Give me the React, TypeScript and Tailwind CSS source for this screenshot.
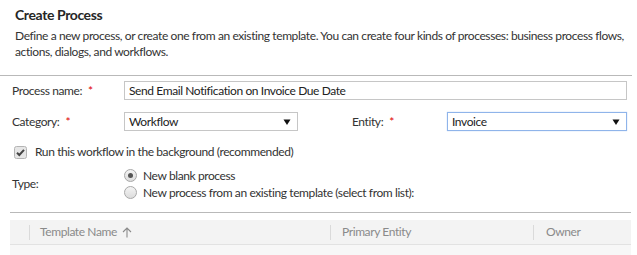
import React from "react";

function Req() {
  return <span className="ml-[6px] text-[#e00000]">*</span>;
}

function Arrow() {
  return (
    <svg width="8" height="8" viewBox="0 0 8 8" className="shrink-0">
      <path d="M0.5 1.5 L7.5 1.5 L4 7 Z" fill="#111" />
    </svg>
  );
}

function Radio({ checked }: { checked?: boolean }) {
  return (
    <span className="flex h-[13px] w-[13px] shrink-0 items-center justify-center rounded-full border border-[#a8a8a8] bg-gradient-to-b from-[#f4f4f4] to-[#dcdcdc]">
      {checked && <span className="h-[5px] w-[5px] rounded-full bg-[#555]" />}
    </span>
  );
}

export default function App() {
  return (
    <div
      className="h-[255px] w-[637px] overflow-hidden bg-white text-[12px] tracking-[-0.4px] text-[#333]"
      style={{ fontFamily: 'Lato, "Liberation Sans", sans-serif' }}
    >
      <div className="pl-[15px] pt-[4px]">
        <h1 className="text-[14px] font-bold leading-[22px] text-[#262626]">Create Process</h1>
        <p className="mt-[2px] w-[620px] text-[12px] leading-[16px] text-[#333]">
          Define a new process, or create one from an existing template. You can create four kinds of processes: business process flows, actions, dialogs, and workflows.
        </p>
      </div>

      <div className="mt-[15px] w-[632px] border-t border-[#b9b9b9]" />

      <div className="mt-[5px] flex h-[19px] items-center">
        <div className="w-[124px] pl-[12px] text-[#333]">
          Process name:<Req />
        </div>
        <div className="flex h-[19px] w-[503px] items-center border border-[#c6c6c6] px-[4px] text-[#222]">
          Send Email Notification on Invoice Due Date
        </div>
      </div>

      <div className="mt-[12px] flex h-[19px] items-center">
        <div className="w-[124px] pl-[12px]">
          Category:<Req />
        </div>
        <div className="flex h-[19px] w-[174px] items-center justify-between border border-[#c6c6c6] pl-[4px] pr-[6px] text-[#222]">
          <span>Workflow</span>
          <Arrow />
        </div>
        <div className="w-[149px] pl-[54px]">
          Entity:<Req />
        </div>
        <div className="flex h-[19px] w-[180px] items-center justify-between border border-[#8fb4ea] pl-[4px] pr-[6px] text-[#222] shadow-[0_0_1px_#a9c6f0]">
          <span>Invoice</span>
          <Arrow />
        </div>
      </div>

      <div className="mt-[13px] flex h-[16px] items-center pl-[14px]">
        <svg width="13" height="13" viewBox="0 0 13 13" className="shrink-0">
          <rect x="0.5" y="0.5" width="12" height="12" rx="2" fill="#e6e6e6" stroke="#b4b4b4" />
          <path d="M3 6.8 L5.3 9 L10 3.8" fill="none" stroke="#444" strokeWidth="2" />
        </svg>
        <span className="ml-[8px]">Run this workflow in the background (recommended)</span>
      </div>

      <div className="mt-[8px] flex">
        <div className="w-[124px] pl-[12px] pt-[7px]">Type:</div>
        <div className="flex flex-col gap-[2px]">
          <div className="flex h-[15px] items-center">
            <Radio checked />
            <span className="ml-[6px]">New blank process</span>
          </div>
          <div className="flex h-[15px] items-center">
            <Radio />
            <span className="ml-[6px]">New process from an existing template (select from list):</span>
          </div>
        </div>
      </div>

      <div className="ml-[10px] mt-[12px] w-[621px] border-t border-[#b9b9b9]" />

      <div className="ml-[10px] mt-[7px] w-[621px] bg-[#f3f3f3]">
        <div className="flex h-[25px] items-center border-b border-[#e2e2e2] text-[#8a8a8a]">
          <div className="flex h-full w-[20px] items-center justify-end">
            <span className="h-[15px] border-l border-[#dadada]" />
          </div>
          <div className="flex w-[300px] items-center pl-[10px]">
            Template Name
            <svg width="10" height="11" viewBox="0 0 10 11" className="ml-[5px]">
              <path d="M5 10.5 V1 M1 5 L5 1 L9 5" fill="none" stroke="#8a8a8a" strokeWidth="1.1" />
            </svg>
          </div>
          <span className="h-[15px] border-l border-[#dadada]" />
          <div className="w-[202px] pl-[11px]">Primary Entity</div>
          <span className="h-[15px] border-l border-[#dadada]" />
          <div className="pl-[12px]">Owner</div>
        </div>
        <div className="h-[10px] bg-[#f7f7f7]" />
      </div>
    </div>
  );
}
